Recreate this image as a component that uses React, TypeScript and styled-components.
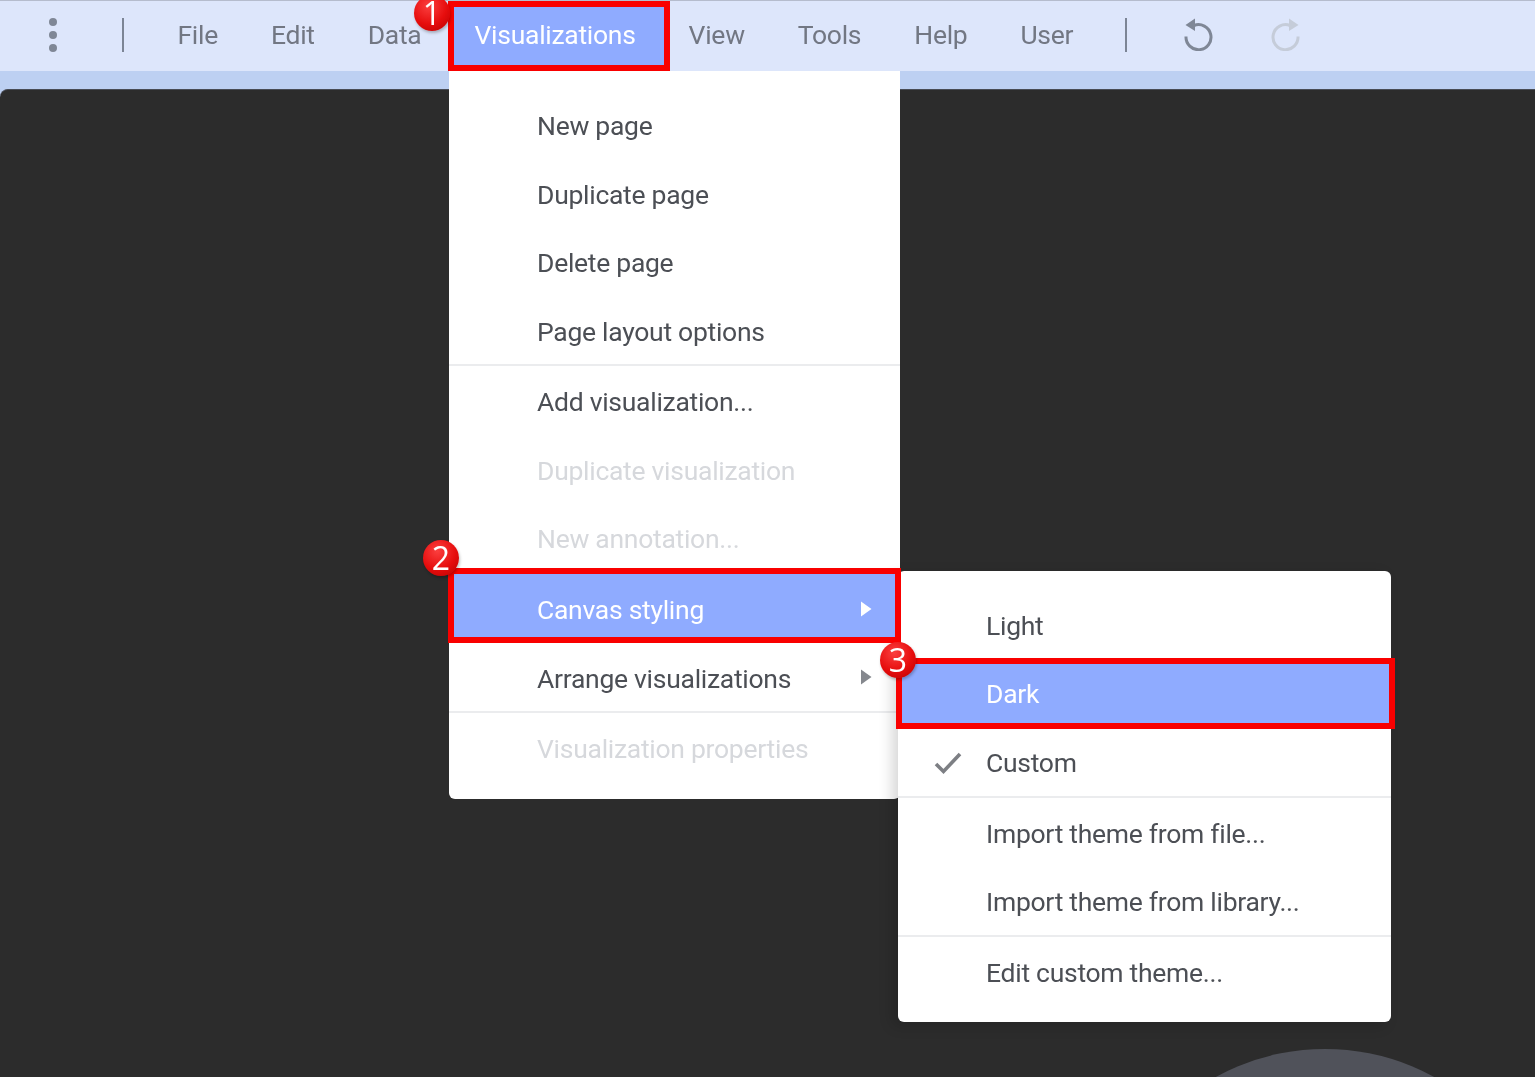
import React from "react";
import styled, { createGlobalStyle } from "styled-components";

const GlobalStyle = createGlobalStyle`
  html, body {
    margin: 0;
    padding: 0;
    background: #2c2c2c;
  }
  body {
    font-family: Roboto, "Liberation Sans", sans-serif;
  }
`;

const Page = styled.div`
  width: 1535px;
  height: 1077px;
  display: flex;
  flex-direction: column;
  overflow: hidden;
  background: #bdd0f2;
  filter: blur(0.6px);
`;

const Toolbar = styled.header`
  height: 70px;
  flex: none;
  display: flex;
  align-items: center;
  background: #dde6fb;
  border-top: 1px solid #b5bccd;
  position: relative;
  z-index: 2;
`;

const DotsButton = styled.div`
  width: 8px;
  margin-left: 49px;
  margin-right: 65px;
  margin-bottom: 2px;
  display: flex;
  flex-direction: column;
  gap: 5px;
`;

const Dot = styled.span`
  width: 8px;
  height: 8px;
  border-radius: 50%;
  background: #7f8796;
`;

const Separator = styled.span`
  width: 2px;
  height: 34px;
  flex: none;
  margin-bottom: 2px;
  background: #7c8595;
`;

const NavList = styled.nav`
  display: flex;
  align-self: stretch;
  margin-left: 27px;
  margin-right: 25px;
`;

const NavItem = styled.div<{ $active?: boolean }>`
  position: relative;
  display: flex;
  align-items: center;
  padding: 0 26.5px 3px;
  font-size: 26.5px;
  letter-spacing: -0.28px;
  color: ${(p) => (p.$active ? "#ffffff" : "#727783")};
  background: ${(p) => (p.$active ? "#8fabff" : "transparent")};
  ${(p) =>
    p.$active &&
    "box-shadow: inset 0 0 0 6px #f90000; padding-right: 34px; margin-right: -7.5px;"}
`;

const HistoryButton = styled.div<{ $faded?: boolean }>`
  width: 34px;
  height: 34px;
  margin-left: 54px;
  margin-bottom: 4px;
  display: flex;
  color: ${(p) => (p.$faded ? "#c5ccd9" : "#7f8796")};
`;

const Strip = styled.div`
  height: 18px;
  flex: none;
`;

const Canvas = styled.main`
  flex: 1;
  position: relative;
  overflow: hidden;
  background: #2c2c2c;
  border-top: 1px solid #484c55;
  border-top-left-radius: 8px;
`;

const Bubble = styled.div`
  position: absolute;
  left: 1098px;
  top: 959px;
  width: 454px;
  height: 454px;
  border-radius: 50%;
  background: #50525a;
`;

const Menu = styled.div<{ $sub?: boolean }>`
  position: absolute;
  top: ${(p) => (p.$sub ? "-5.5px" : "100%")};
  left: ${(p) => (p.$sub ? "449px" : "1px")};
  width: ${(p) => (p.$sub ? "493px" : "451px")};
  box-sizing: border-box;
  padding: 21.5px 0 14.5px;
  background: #ffffff;
  border-radius: 0 0 6px 6px;
  letter-spacing: -0.28px;
  ${(p) => p.$sub && "border-radius: 6px; box-shadow: -6px 4px 14px rgba(0, 0, 0, 0.16);"}
  z-index: 3;
`;

const MenuRow = styled.div<{ $muted?: boolean; $selected?: boolean; $gapped?: boolean }>`
  position: relative;
  box-sizing: border-box;
  height: 68.5px;
  display: flex;
  align-items: center;
  padding: 0 0 2px 88px;
  margin-top: ${(p) => (p.$gapped ? "2.5px" : "0")};
  font-size: 26.5px;
  white-space: nowrap;
  color: ${(p) => (p.$muted ? "#d6d8dc" : p.$selected ? "#ffffff" : "#4c4f55")};
`;

const RowLabel = styled.span<{ $lifted?: boolean }>`
  position: relative;
  top: ${(p) => (p.$lifted ? "-1px" : "0")};
  z-index: 5;
`;

const Frame = styled.span<{ $sub?: boolean }>`
  position: absolute;
  top: ${(p) => (p.$sub ? "-3px" : "-9px")};
  bottom: ${(p) => (p.$sub ? "1px" : "2.5px")};
  left: ${(p) => (p.$sub ? "-2px" : "-1px")};
  right: ${(p) => (p.$sub ? "-4px" : "-1px")};
  border: 6px solid #f90000;
  background: #8fabff;
  z-index: 4;
`;

const Rule = styled.div`
  height: 2px;
  margin: -2.5px 0 2.5px;
  background: #ebecee;
`;

const SubArrow = styled.svg`
  position: absolute;
  right: 28px;
  top: 50%;
  margin-top: -2px;
  transform: translateY(-50%);
  z-index: 5;
`;

const CheckMark = styled.svg`
  position: absolute;
  left: 36px;
  top: 50%;
  margin-top: -1px;
  transform: translateY(-50%);
`;

const Badge = styled.span<{ $x: number; $y: number }>`
  position: absolute;
  left: ${(p) => p.$x}px;
  top: ${(p) => p.$y}px;
  width: 36px;
  height: 36px;
  border-radius: 50%;
  display: flex;
  align-items: center;
  justify-content: center;
  background: radial-gradient(circle at 40% 30%, #fb3f3f 0%, #e60d0d 55%, #b80000 100%);
  box-shadow: 1px 2px 3px rgba(0, 0, 0, 0.25);
  color: #ffffff;
  font-family: "Open Sans", sans-serif;
  font-size: 32px;
  line-height: 0.8;
  z-index: 5;
`;

const HistoryIcon = ({ flip }: { flip?: boolean }) => (
  <svg
    width="34"
    height="34"
    viewBox="0 0 34 34"
    style={flip ? { transform: "scaleX(-1)" } : undefined}
  >
    <path
      d="M13 8.5 A12.5 12.5 0 1 1 5 19.5"
      fill="none"
      stroke="currentColor"
      strokeWidth="3"
    />
    <path d="M14 1.5 L4.5 8 L14 14 Z" fill="currentColor" />
  </svg>
);

const Arrow = ({ color }: { color: string }) => (
  <SubArrow width="12" height="16" viewBox="0 0 12 16">
    <path d="M1 0.5 L11.5 8 L1 15.5 Z" fill={color} />
  </SubArrow>
);

const navItems = ["File", "Edit", "Data"];
const navItemsAfter = ["View", "Tools", "Help", "User"];

const App: React.FC = () => {
  return (
    <>
      <GlobalStyle />
      <Page>
        <Toolbar>
          <DotsButton>
            <Dot />
            <Dot />
            <Dot />
          </DotsButton>
          <Separator />
          <NavList>
            {navItems.map((item) => (
              <NavItem key={item}>{item}</NavItem>
            ))}
            <NavItem $active>
              Visualizations
              <Menu>
                <MenuRow>New page</MenuRow>
                <MenuRow>Duplicate page</MenuRow>
                <MenuRow>Delete page</MenuRow>
                <MenuRow>Page layout options</MenuRow>
                <Rule />
                <MenuRow>Add visualization...</MenuRow>
                <MenuRow $muted>Duplicate visualization</MenuRow>
                <MenuRow $muted>New annotation...</MenuRow>
                <MenuRow $selected $gapped>
                  <Frame />
                  <RowLabel>Canvas styling</RowLabel>
                  <Arrow color="#ffffff" />
                  <Menu $sub>
                    <MenuRow>Light</MenuRow>
                    <MenuRow $selected>
                      <Frame $sub />
                      <RowLabel $lifted>Dark</RowLabel>
                    </MenuRow>
                    <MenuRow>
                      <CheckMark width="28" height="24" viewBox="0 0 28 24">
                        <path
                          d="M2 13 L9.5 20.5 L26 3"
                          fill="none"
                          stroke="#7d7f84"
                          strokeWidth="3.6"
                        />
                      </CheckMark>
                      Custom
                    </MenuRow>
                    <Rule />
                    <MenuRow>Import theme from file...</MenuRow>
                    <MenuRow>Import theme from library...</MenuRow>
                    <Rule />
                    <MenuRow>Edit custom theme...</MenuRow>
                  </Menu>
                </MenuRow>
                <MenuRow>
                  Arrange visualizations
                  <Arrow color="#85888e" />
                </MenuRow>
                <Rule />
                <MenuRow $muted>Visualization properties</MenuRow>
              </Menu>
            </NavItem>
            {navItemsAfter.map((item) => (
              <NavItem key={item}>{item}</NavItem>
            ))}
          </NavList>
          <Separator />
          <HistoryButton>
            <HistoryIcon />
          </HistoryButton>
          <HistoryButton $faded>
            <HistoryIcon flip />
          </HistoryButton>
        </Toolbar>
        <Strip />
        <Canvas>
          <Bubble />
        </Canvas>
        <Badge $x={414} $y={-5}>1</Badge>
        <Badge $x={423} $y={540}>2</Badge>
        <Badge $x={880} $y={642}>3</Badge>
      </Page>
    </>
  );
};

export default App;
